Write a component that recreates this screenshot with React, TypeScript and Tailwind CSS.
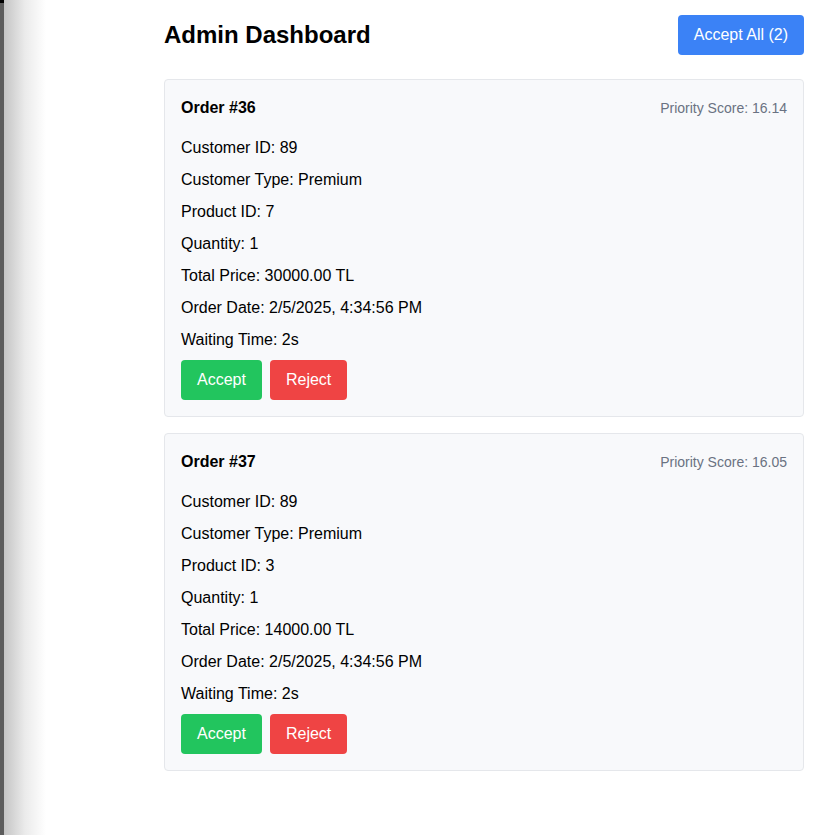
import React from "react";

type Order = {
	id: number;
	customerId: number;
	customerType: string;
	productId: number;
	quantity: number;
	totalPrice: string;
	orderDate: string;
	waiting: string;
	priority: string;
};

const orders: Order[] = [
	{
		id: 36,
		customerId: 89,
		customerType: "Premium",
		productId: 7,
		quantity: 1,
		totalPrice: "30000.00",
		orderDate: "2/5/2025, 4:34:56 PM",
		waiting: "2s",
		priority: "16.14",
	},
	{
		id: 37,
		customerId: 89,
		customerType: "Premium",
		productId: 3,
		quantity: 1,
		totalPrice: "14000.00",
		orderDate: "2/5/2025, 4:34:56 PM",
		waiting: "2s",
		priority: "16.05",
	},
];

const OrderCard = ({ order }: { order: Order }) => {
	const rows = [
		`Customer ID: ${order.customerId}`,
		`Customer Type: ${order.customerType}`,
		`Product ID: ${order.productId}`,
		`Quantity: ${order.quantity}`,
		`Total Price: ${order.totalPrice} TL`,
		`Order Date: ${order.orderDate}`,
		`Waiting Time: ${order.waiting}`,
	];

	return (
		<div className="mb-4 rounded border border-gray-200 bg-[#f8f9fb] p-4">
			<div className="mb-4 flex items-center justify-between">
				<h2 className="text-base font-bold text-black">Order #{order.id}</h2>
				<span className="text-sm text-gray-500">
					Priority Score: {order.priority}
				</span>
			</div>
			{rows.map((row) => (
				<p key={row} className="mb-2 text-base text-black">
					{row}
				</p>
			))}
			<div className="flex gap-2">
				<button className="rounded bg-[#22c55e] px-4 py-2 text-base text-white">
					Accept
				</button>
				<button className="rounded bg-[#ef4444] px-4 py-2 text-base text-white">
					Reject
				</button>
			</div>
		</div>
	);
};

export default function App() {
	return (
		<div className="flex min-h-[835px] bg-white font-['Liberation_Sans',Arial,sans-serif]">
			{/* window edge + shadow */}
			<div className="flex w-[4px] flex-col bg-[#5c5c5c]">
				<div className="h-[3px] bg-black" />
			</div>
			<div className="w-[42px] bg-gradient-to-r from-[#c4c4c4] via-[#ebebeb] to-white" />
			<div className="ml-[118px] w-[640px] pt-[15px]">
				<div className="mb-6 flex items-center justify-between">
					<h1 className="text-2xl font-bold text-black">Admin Dashboard</h1>
					<button className="rounded bg-[#3b82f6] px-4 py-2 text-base text-white">
						Accept All ({orders.length})
					</button>
				</div>
				{orders.map((order) => (
					<OrderCard key={order.id} order={order} />
				))}
			</div>
		</div>
	);
}
